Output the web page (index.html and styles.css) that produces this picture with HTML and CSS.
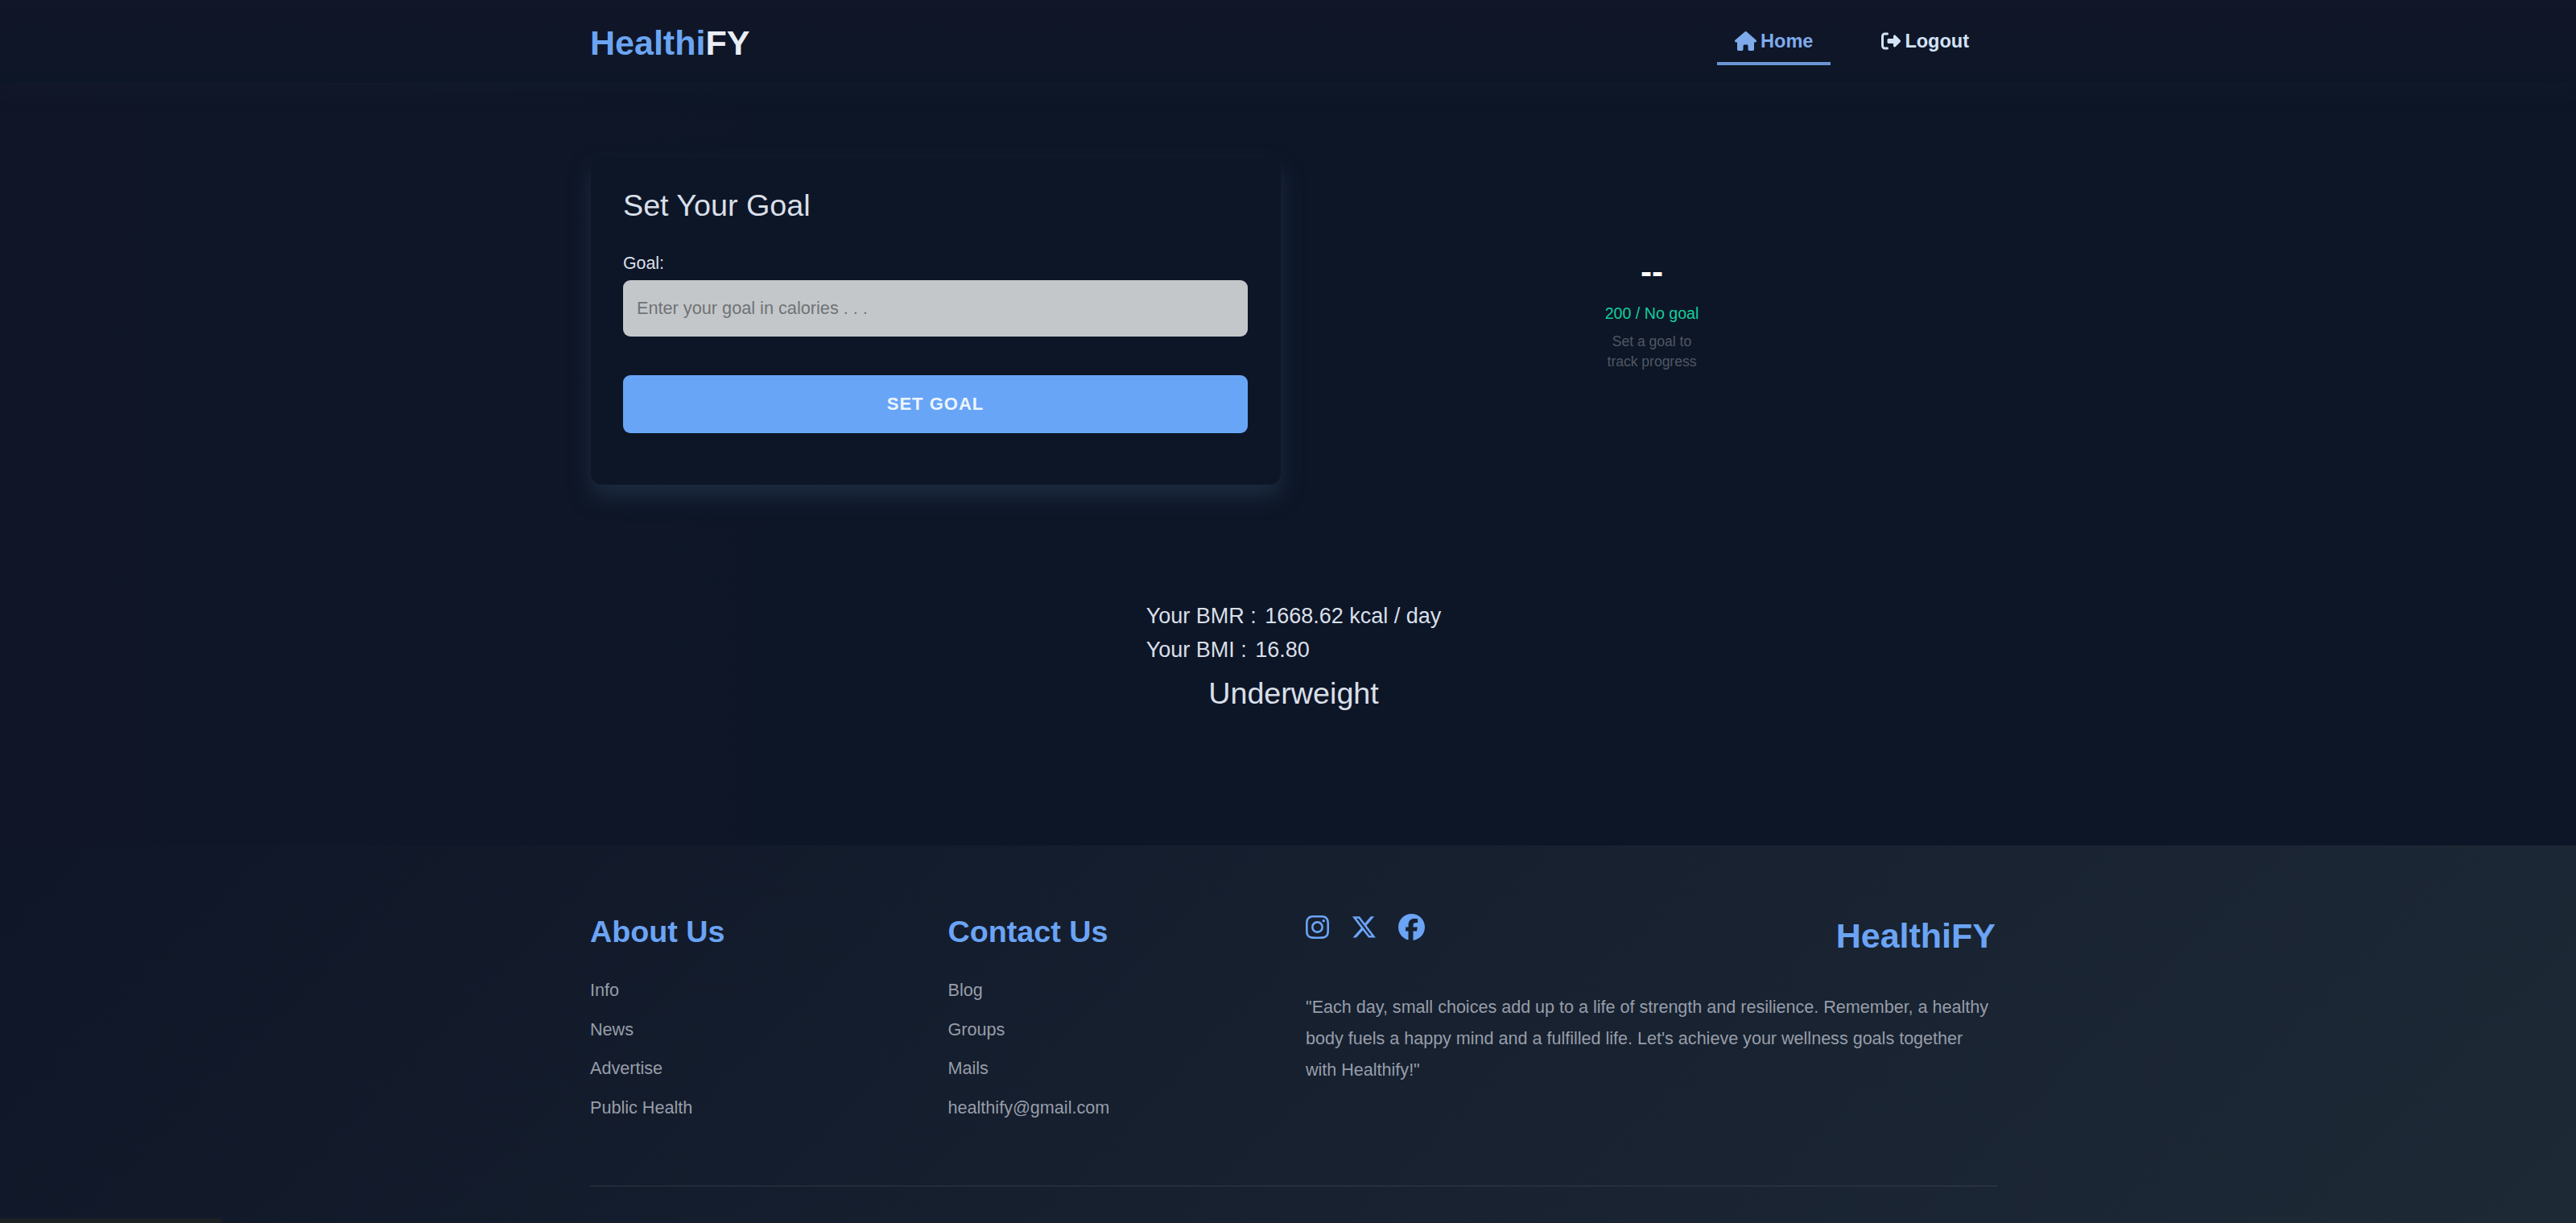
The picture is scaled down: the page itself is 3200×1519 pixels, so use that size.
FILE: index.html
```html
<!DOCTYPE html>
<html lang="en">
<head>
    <meta charset="UTF-8">
    <meta name="viewport" content="width=device-width, initial-scale=1.0">
    <title>HealthiFY</title>
    <link rel="stylesheet" href="styles.css">
</head>
<body>
    <nav class="navbar">
        <a class="logo" href="#">Healthi<span>FY</span></a>
        <div class="nav-links">
            <a class="nav-link active" href="#">
                <svg class="icon-home" viewBox="0 0 576 512"><path d="M575.8 255.5c0 18-15 32.1-32 32.1h-32l.7 160.2c0 2.700-.2 5.400-.5 8.100V472c0 22.100-17.900 40-40 40H456c-1.100 0-2.200 0-3.300-.1c-1.400 .1-2.800 .1-4.200 .1H416 392c-22.100 0-40-17.900-40-40V448 384c0-17.700-14.300-32-32-32H256c-17.700 0-32 14.300-32 32v64 24c0 22.100-17.900 40-40 40H160 128.100c-1.500 0-3-.1-4.500-.2c-1.200 .1-2.400 .2-3.600 .2H104c-22.100 0-40-17.900-40-40V360c0-.9 0-1.900 .1-2.800V287.600H32c-18 0-32-14-32-32.100c0-9 3-17 10-24L266.400 8c7-7 15-8 22-8s15 2 21 7L564.800 231.500c8 7 12 15 11 24z"/></svg>
                Home
            </a>
            <a class="nav-link" href="#">
                <svg class="icon-logout" viewBox="0 0 512 512"><path d="M377.900 105.900L500.700 228.700c7.200 7.200 11.300 17.100 11.300 27.300s-4.100 20.100-11.300 27.300L377.900 406.100c-6.400 6.400-15 9.900-24 9.900c-18.700 0-33.900-15.200-33.900-33.900l0-62.100-128 0c-17.700 0-32-14.300-32-32l0-64c0-17.700 14.300-32 32-32l128 0 0-62.100c0-18.700 15.200-33.900 33.900-33.900c9 0 17.600 3.600 24 9.900zM160 96L96 96c-17.700 0-32 14.300-32 32l0 256c0 17.700 14.300 32 32 32l64 0c17.700 0 32 14.300 32 32s-14.300 32-32 32l-64 0c-53 0-96-43-96-96L0 128C0 75 43 32 96 32l64 0c17.700 0 32 14.300 32 32s-14.300 32-32 32z"/></svg>
                Logout
            </a>
        </div>
    </nav>

    <main class="dashboard">
        <form class="goal-card">
            <h2>Set Your Goal</h2>
            <label for="goal">Goal:</label>
            <input type="text" id="goal" placeholder="Enter your goal in calories . . .">
            <button type="button">SET GOAL</button>
        </form>

        <div class="progress">
            <div class="progress-value">--</div>
            <div class="progress-count">200 / No goal</div>
            <div class="progress-hint">Set a goal to track progress</div>
        </div>
    </main>

    <section class="stats">
        <div>
            <p>Your BMR : <span>1668.62 kcal / day</span></p>
            <p>Your BMI : <span>16.80</span></p>
            <h3>Underweight</h3>
        </div>
    </section>

    <footer class="footer">
        <div class="footer-grid">
            <div>
                <h3>About Us</h3>
                <ul>
                    <li>Info</li>
                    <li>News</li>
                    <li>Advertise</li>
                    <li>Public Health</li>
                </ul>
            </div>
            <div>
                <h3>Contact Us</h3>
                <ul>
                    <li>Blog</li>
                    <li>Groups</li>
                    <li>Mails</li>
                    <li>healthify@gmail.com</li>
                </ul>
            </div>
            <div>
                <div class="footer-top">
                    <div class="socials">
                        <svg class="icon-instagram" viewBox="0 0 448 448"><path d="M224.100 109c-63.600 0-114.900 51.300-114.900 114.900s51.300 114.900 114.900 114.900S339 287.500 339 223.900 287.700 109 224.100 109zm0 189.600c-41.100 0-74.700-33.500-74.700-74.700s33.500-74.700 74.700-74.700 74.700 33.500 74.700 74.700-33.600 74.700-74.700 74.700zm146.400-194.300c0 14.900-12 26.800-26.800 26.800-14.900 0-26.800-12-26.800-26.800s12-26.800 26.800-26.800 26.800 12 26.800 26.800zm76.100 27.200c-1.700-35.900-9.900-67.700-36.200-93.900-26.200-26.200-58-34.400-93.900-36.200-37-2.100-147.900-2.100-184.900 0-35.800 1.700-67.600 9.900-93.900 36.100s-34.400 58-36.200 93.900c-2.100 37-2.100 147.900 0 184.900 1.700 35.900 9.900 67.700 36.200 93.900s58 34.400 93.900 36.200c37 2.100 147.900 2.100 184.900 0 35.900-1.700 67.700-9.900 93.900-36.200 26.200-26.200 34.400-58 36.200-93.900 2.100-37 2.100-147.800 0-184.800zM398.800 356c-7.800 19.600-22.900 34.700-42.600 42.600-29.500 11.700-99.500 9-132.100 9s-102.700 2.600-132.100-9c-19.600-7.800-34.700-22.900-42.600-42.600-11.700-29.500-9-99.500-9-132.100s-2.600-102.700 9-132.100c7.800-19.600 22.900-34.700 42.600-42.600 29.500-11.700 99.500-9 132.100-9s102.700-2.600 132.100 9c19.600 7.800 34.700 22.900 42.600 42.600 11.700 29.500 9 99.500 9 132.100s2.700 102.700-9 132.100z"/></svg>
                        <svg class="icon-x" viewBox="13 48 475 417"><path d="M389.200 48h70.600L305.600 224.200 487 464H345L233.700 318.600 106.500 464H35.800L200.700 275.500 26.800 48H172.400L272.900 180.900 389.200 48zM364.400 421.800h39.100L151.100 88h-42L364.400 421.800z"/></svg>
                        <svg class="icon-facebook" viewBox="0 0 512 512"><path d="M512 256C512 114.600 397.400 0 256 0S0 114.600 0 256C0 376 82.700 476.800 194.200 504.500V334.200H141.400V256h52.800V222.300c0-87.100 39.400-127.500 125-127.500c16.200 0 44.200 3.200 55.700 6.400V172c-6-.6-16.500-1-29.600-1c-42 0-58.200 15.900-58.200 57.200V256h83.600l-14.400 78.200H287V510.100C413.800 494.800 512 386.900 512 256z"/></svg>
                    </div>
                    <div class="footer-logo">HealthiFY</div>
                </div>
                <p class="quote">"Each day, small choices add up to a life of strength and resilience. Remember, a healthy body fuels a happy mind and a fulfilled life. Let's achieve your wellness goals together with Healthify!"</p>
            </div>
        </div>
        <div class="footer-line"></div>
    </footer>
    <div class="corner-bar"></div>
</body>
</html>
```

FILE: styles.css
```css
* {
    margin: 0;
    padding: 0;
    box-sizing: border-box;
}
body {
    height: 1519px;
    overflow: hidden;
    display: flex;
    flex-direction: column;
    font-family: "Liberation Sans", Arial, sans-serif;
    background: linear-gradient(90deg, #101627 0, #0d1627 1100px);
    color: #d9dfe8;
}
h2, h3 {
    font-size: 37.7px;
    line-height: 44px;
    font-weight: normal;
}

/* navbar */
.navbar {
    height: 103px;
    flex-shrink: 0;
    padding: 0 732px 0 733px;
    display: flex;
    justify-content: space-between;
    align-items: center;
    background: linear-gradient(#111628, #0d1627);
    box-shadow: 0 4px 30px rgba(30, 41, 59, 0.3);
}
.logo {
    padding-top: 2px;
    font-size: 43px;
    line-height: 50px;
    font-weight: bold;
    color: #6ba4f2;
    text-decoration: none;
}
.logo span {
    color: #e8edf6;
}
.nav-links {
    display: flex;
    gap: 41px;
}
.nav-link {
    display: flex;
    align-items: center;
    gap: 5px;
    padding: 15px 22px 12px;
    border-bottom: 4px solid transparent;
    font-size: 23.5px;
    line-height: 28px;
    font-weight: bold;
    color: #d3e3f8;
    text-decoration: none;
}
.nav-link.active {
    color: #7fabec;
    border-bottom-color: #6a94d4;
}
svg {
    display: block;
    fill: currentColor;
}
.icon-home {
    width: 27px;
    height: 24px;
}
.icon-logout {
    width: 24px;
    height: 24px;
}

/* goal form and progress */
.dashboard {
    display: grid;
    grid-template-columns: 857px 858px;
    justify-content: space-between;
    margin-top: 92px;
    padding: 0 719px 0 734px;
}
.goal-card {
    height: 407px;
    padding: 38px 41px 0 40px;
    border-radius: 14px;
    background-color: #0d1627;
    box-shadow: 0 14px 27px #1d2c40;
}
.goal-card label {
    display: block;
    margin-top: 37px;
    font-size: 21.3px;
    line-height: 27px;
}
.goal-card input {
    display: block;
    width: 100%;
    height: 70px;
    margin-top: 7px;
    padding: 0 17px;
    border: none;
    border-radius: 9px;
    background-color: #c4c7c9;
    font-family: inherit;
    font-size: 21.7px;
}
.goal-card input::placeholder {
    color: #6f7377;
}
.goal-card button {
    display: block;
    width: 100%;
    height: 72px;
    margin-top: 48px;
    border: none;
    border-radius: 9px;
    background-color: #68a5f6;
    color: #eef5ff;
    font-family: inherit;
    font-size: 22px;
    font-weight: bold;
    letter-spacing: 1px;
}
.progress {
    display: flex;
    flex-direction: column;
    align-items: center;
    padding-top: 119px;
    text-align: center;
}
.progress-value {
    font-size: 42px;
    line-height: 48px;
    font-weight: bold;
    color: #fff;
}
.progress-count {
    margin-top: 15px;
    font-size: 19.6px;
    line-height: 24px;
    color: #12cf9c;
}
.progress-hint {
    width: 130px;
    margin-top: 11px;
    font-size: 17.5px;
    line-height: 25px;
    color: #505762;
}

/* bmr / bmi */
.stats {
    display: flex;
    justify-content: center;
    margin-top: 142px;
    padding-left: 14px;
}
.stats p {
    font-size: 27px;
    line-height: 42px;
}
.stats span {
    margin-left: 3px;
}
.stats h3 {
    margin-top: 11px;
    text-align: center;
}

/* footer */
.footer {
    height: 469px;
    margin-top: auto;
    flex-shrink: 0;
    padding: 85px 719px 0 733px;
    background: linear-gradient(135deg, #0f1627 0%, #172130 55%, #1e2936 100%);
    color: #979da9;
}
.footer-grid {
    display: grid;
    grid-template-columns: 429px 429px 859px;
    justify-content: space-between;
    height: 337px;
}
.footer h3 {
    margin-bottom: 38px;
    font-weight: bold;
    color: #6ba4f5;
}
.footer ul {
    list-style: none;
}
.footer li {
    margin-bottom: 22.5px;
    font-size: 21.6px;
    line-height: 26px;
}
.footer-top {
    display: flex;
    justify-content: space-between;
    padding: 2px 2px 0 0;
}
.socials {
    display: flex;
    align-items: center;
    gap: 28px;
    height: 28px;
    color: #6ba4f5;
}
.icon-instagram {
    width: 29px;
    height: 29px;
}
.icon-x {
    width: 30px;
    height: 27px;
}
.icon-facebook {
    width: 33px;
    height: 33px;
}
.footer-logo {
    font-size: 43px;
    line-height: 50px;
    font-weight: bold;
    color: #6ba4f5;
}
.quote {
    margin-top: 44px;
    padding-right: 5px;
    font-size: 21.55px;
    line-height: 39px;
}
.footer-line {
    height: 2px;
    background-color: rgba(255, 255, 255, 0.06);
}
.corner-bar {
    position: absolute;
    left: 0;
    bottom: 0;
    width: 275px;
    height: 6px;
    background-color: #1c2124;
}
```
